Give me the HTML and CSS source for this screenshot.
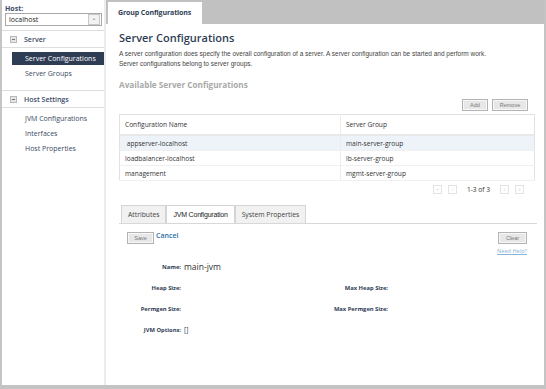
FILE: index.html
```html
<!DOCTYPE html>
<html lang="en">
<head>
    <meta charset="UTF-8">
    <title>Group Configurations</title>
    <link rel="stylesheet" href="styles.css">
</head>
<body>
    <div class="app">
        <div class="sidebar">
            <div class="host">
                <label>Host:</label>
                <div class="host-select">
                    <span>localhost</span>
                    <span class="arrow">&#8964;</span>
                </div>
            </div>

            <div class="nav-header"><span class="toggle"></span>Server</div>
            <ul class="nav-list">
                <li class="active">Server Configurations</li>
                <li>Server Groups</li>
            </ul>

            <div class="nav-header"><span class="toggle"></span>Host Settings</div>
            <ul class="nav-list">
                <li>JVM Configurations</li>
                <li>Interfaces</li>
                <li>Host Properties</li>
            </ul>
        </div>

        <div class="main">
            <div class="tab-bar">
                <div class="main-tab">Group Configurations</div>
            </div>

            <div class="content">
                <h1>Server Configurations</h1>
                <p class="desc">A server configuration does specify the overall configuration of a server. A server configuration can be started and perform work.<br>Server configurations belong to server groups.</p>

                <h2>Available Server Configurations</h2>

                <div class="tools">
                    <button class="btn">Add</button>
                    <button class="btn">Remove</button>
                </div>

                <table class="grid">
                    <thead>
                        <tr><th>Configuration Name</th><th>Server Group</th></tr>
                    </thead>
                    <tbody>
                        <tr class="selected"><td>&nbsp;appserver-localhost</td><td>main-server-group</td></tr>
                        <tr><td>loadbalancer-localhost</td><td>lb-server-group</td></tr>
                        <tr><td>management</td><td>mgmt-server-group</td></tr>
                    </tbody>
                </table>

                <div class="pager">
                    <span class="pg">&laquo;</span>
                    <span class="pg">&lsaquo;</span>
                    <span class="count">1-3 of 3</span>
                    <span class="pg">&rsaquo;</span>
                    <span class="pg">&raquo;</span>
                </div>

                <div class="sub-tabs">
                    <div class="sub-tab">Attributes</div>
                    <div class="sub-tab active">JVM Configuration</div>
                    <div class="sub-tab">System Properties</div>
                </div>

                <div class="form-tools">
                    <button class="btn">Save</button>
                    <a class="link">Cancel</a>
                    <button class="btn clear">Clear</button>
                </div>
                <div class="help"><a>Need Help?</a></div>

                <div class="form">
                    <div class="row">
                        <div class="lbl">Name:</div>
                        <div class="val name">main-jvm</div>
                    </div>
                    <div class="row">
                        <div class="lbl">Heap Size:</div>
                        <div class="val"></div>
                        <div class="lbl wide">Max Heap Size:</div>
                    </div>
                    <div class="row">
                        <div class="lbl">Permgen Size:</div>
                        <div class="val"></div>
                        <div class="lbl wide">Max Permgen Size:</div>
                    </div>
                    <div class="row">
                        <div class="lbl">JVM Options:</div>
                        <div class="val">[]</div>
                    </div>
                </div>
            </div>
        </div>
    </div>
</body>
</html>
```

FILE: styles.css
```css
body {
    margin: 0;
    background: #fff;
    font-family: "Open Sans", "DejaVu Sans", sans-serif;
    color: #333;
}
.app {
    display: flex;
    height: 385px;
    width: 544px;
    border-left: 2px solid #c4c4c4;
    border-bottom: 4px solid #c4c4c4;
    background: #fff;
}
.sidebar {
    width: 102px;
    border-right: 2px solid #ececec;
    font-size: 7px;
}
.host {
    padding: 4px 2px 4px 3px;
    border-bottom: 1px solid #ddd;
}
.host label {
    display: block;
    font-weight: bold;
    color: #3b4a63;
    line-height: 9px;
}
.host-select {
    display: flex;
    justify-content: space-between;
    align-items: center;
    height: 11px;
    border: 1px solid #a8a8a8;
    padding-left: 3px;
    color: #222;
}
.host-select .arrow {
    width: 10px;
    height: 9px;
    margin-right: 1px;
    border: 1px solid #c8c8c8;
    background: #f2f2f2;
    color: #777;
    font-size: 6px;
    line-height: 6px;
    text-align: center;
}
.nav-header {
    display: flex;
    align-items: center;
    height: 16px;
    padding-left: 8px;
    border-bottom: 1px solid #ddd;
    color: #3b4a63;
    font-weight: 600;
}
.toggle {
    width: 5px;
    height: 5px;
    margin-right: 7px;
    border: 1px solid #b8b8b8;
    background: #e6e6e6;
    position: relative;
}
.toggle::after {
    content: "";
    position: absolute;
    left: 1px;
    top: 2px;
    width: 3px;
    height: 1px;
    background: #777;
}
.nav-list {
    list-style: none;
    margin: 0;
    padding: 4px 0 8px 10px;
    border-bottom: 1px solid #ddd;
}
.nav-list li {
    height: 15px;
    line-height: 13px;
    padding-left: 13px;
    color: #3b4a63;
}
.nav-list li.active {
    height: 13px;
    margin-bottom: 2px;
    background: #2e3d54;
    color: #fff;
}
.sidebar .nav-list:last-child {
    border-bottom: none;
}
.main {
    flex: 1;
    display: flex;
    flex-direction: column;
    border-right: 2px solid #c4c4c4;
}
.tab-bar {
    height: 24px;
    background: #c1c1c1;
    padding: 2px 0 0 2px;
    box-sizing: border-box;
}
.main-tab {
    width: 94px;
    height: 22px;
    background: #fff;
    font-size: 7px;
    font-weight: bold;
    color: #2e3d54;
    line-height: 22px;
    padding-left: 10px;
    box-sizing: border-box;
    letter-spacing: -0.1px;
}
.content {
    flex: 1;
    padding: 6px 5px 0 13px;
}
.content h1 {
    margin: 0;
    font-size: 11px;
    font-weight: 600;
    color: #2e3d54;
    line-height: 16px;
}
.desc {
    margin: 3px 0 0;
    font-family: "Liberation Sans", Arial, sans-serif;
    font-size: 6.5px;
    line-height: 10px;
    color: #444;
}
.content h2 {
    margin: 10px 0 0;
    font-size: 8.2px;
    font-weight: bold;
    color: #a9a9a9;
    line-height: 12px;
}
.tools {
    display: flex;
    justify-content: flex-end;
    gap: 4px;
    margin-top: 8px;
    padding-right: 11px;
}
.btn {
    height: 12px;
    padding: 0 6px;
    border: 1px solid #b3b3b3;
    background: #e7e7e7;
    box-shadow: inset 0 0 0 1px #f7f7f7;
    font-family: "Liberation Sans", Arial, sans-serif;
    font-size: 5.5px;
    color: #777;
}
.tools .btn:first-child {
    width: 26px;
}
.tools .btn:last-child {
    width: 36px;
}
.grid {
    width: 416px;
    margin-top: 3px;
    border: 1px solid #e2e2e2;
    border-collapse: collapse;
    font-size: 6.6px;
    color: #333;
}
.grid th {
    height: 17px;
    text-align: left;
    font-weight: normal;
    padding-left: 5px;
    border-bottom: 2px solid #e8e8e8;
}
.grid td {
    height: 14px;
    padding: 0 0 0 5px;
    border-bottom: 1px solid #f0f0f0;
}
.grid th:first-child,
.grid td:first-child {
    width: 214px;
    padding-left: 5px;
    border-right: 1px solid #ececec;
}
.grid tr.selected td {
    background: #eef3f9;
}
.pager {
    display: flex;
    justify-content: flex-end;
    align-items: center;
    gap: 6px;
    height: 14px;
    margin-top: 1px;
    padding-right: 15px;
    font-size: 6.6px;
    color: #333;
}
.pg {
    width: 7px;
    height: 7px;
    border: 1px solid #e3e3e3;
    color: #ccc;
    font-size: 5px;
    line-height: 7px;
    text-align: center;
}
.pager .count {
    margin: 0 4px;
}
.sub-tabs {
    display: flex;
    margin-top: 9px;
    padding-left: 2px;
    border-bottom: 1px solid #d8d8d8;
    width: 416px;
}
.sub-tab {
    height: 17px;
    padding: 0 6px;
    line-height: 17px;
    border: 1px solid #d4d4d4;
    border-bottom: none;
    background: #f1f1f1;
    font-size: 6.8px;
    color: #444;
}
.sub-tab.active {
    background: #fff;
    font-family: "Liberation Sans", Arial, sans-serif;
    letter-spacing: -0.2px;
    font-size: 7px;
    color: #222;
}
.form-tools {
    display: flex;
    align-items: flex-start;
    margin-top: 8px;
    padding-left: 8px;
    width: 400px;
}
.form-tools .btn {
    width: 27px;
}
.link {
    margin-left: 2px;
    font-size: 7px;
    color: #2a6fa8;
    font-weight: 600;
    line-height: 8px;
}
.form-tools .clear {
    margin-left: auto;
    width: 29px;
}
.help {
    width: 408px;
    text-align: right;
    margin-top: 3px;
    font-size: 5.6px;
    line-height: 8px;
}
.help a {
    color: #8ab4d8;
    text-decoration: underline;
}
.form {
    margin-top: 1px;
}
.row {
    display: flex;
    align-items: center;
    height: 21px;
    line-height: 10px;
}
.lbl {
    width: 62px;
    text-align: right;
    font-size: 5.8px;
    font-weight: bold;
    color: #2e3d54;
}
.lbl.wide {
    width: 92px;
}
.val {
    width: 112px;
    padding-left: 3px;
    font-size: 6.5px;
    color: #2e3d54;
}
.val.name {
    font-size: 8.5px;
    color: #333;
}
```
